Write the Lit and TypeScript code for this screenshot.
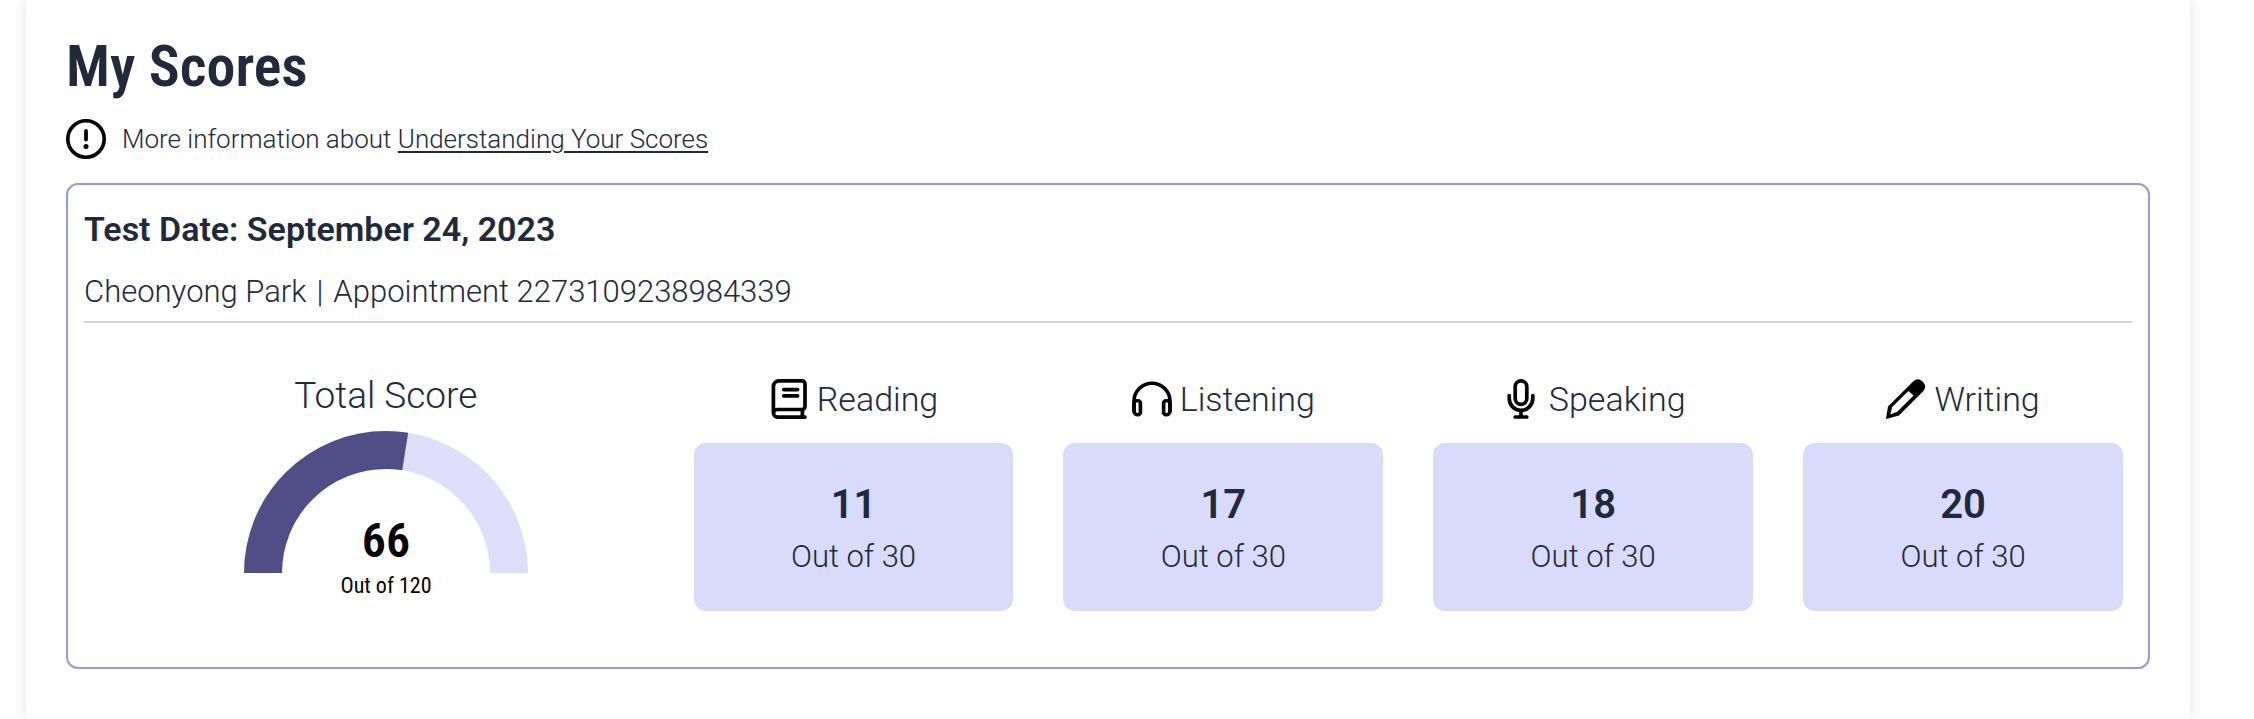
import { LitElement, html, css, svg } from "lit";
import { customElement, property } from "lit/decorators.js";

type Section = { name: string; score: number; icon: unknown };

const bookIcon = svg`
  <g fill="none" stroke="currentColor" stroke-width="3.7" stroke-linecap="round" stroke-linejoin="round">
    <path d="M4.400 33.400V7.400a5.500 5.500 0 0 1 5.500-5.500H33a3 3 0 0 1 3 3V27.500a3 3 0 0 1-3 3H8.500a4 3.800 0 0 0 0 7.600H36"/>
    <path d="M33.400 31V38M14.800 10.600H28.600M14.800 16.800H28.600"/>
  </g>`;

const headphonesIcon = svg`
  <g fill="none" stroke="currentColor" stroke-width="3.6" stroke-linecap="round" stroke-linejoin="round">
    <path d="M2 32V22.300a18 18 0 0 1 36 0V32"/>
    <path d="M2 24.400a2.600 2.600 0 0 1 2.600-2.600H6a2.400 2.400 0 0 1 2.400 2.400V33.400a2.400 2.400 0 0 1-2.400 2.400H5.800a3.800 3.800 0 0 1-3.800-3.800Z"/>
    <path d="M38 24.400a2.600 2.600 0 0 0-2.600-2.600H34a2.400 2.400 0 0 0-2.400 2.400V33.400a2.400 2.400 0 0 0 2.400 2.400H34.200a3.800 3.800 0 0 0 3.800-3.800Z"/>
  </g>`;

const micIcon = svg`
  <g fill="none" stroke="currentColor" stroke-width="3.7" stroke-linecap="round">
    <rect x="14.2" y="1.9" width="11.6" height="23.4" rx="5.8"/>
    <path d="M8.200 16.600V19.500a11.800 11.800 0 0 0 23.600 0V16.600M20 31.500V38M14.200 38H25.800"/>
  </g>`;

const pencilIcon = svg`
  <path fill="currentColor" fill-rule="evenodd"
    d="M0 40L2 27.600L27.400 2.200Q32 -1.800 36.300 2.200L37.400 3.400Q41 7.800 37.200 12.200L13 36.400ZM22.400 12L6.200 28L4.300 35.400L11.200 32.800L27.600 16.600Z"/>`;

@customElement("score-gauge")
export class ScoreGauge extends LitElement {
  @property({ type: Number }) value = 0;
  @property({ type: Number }) max = 100;

  static styles = css`
    :host { display: block; }
    svg { display: block; width: 284px; max-width: 100%; margin: 0 auto; overflow: visible; }
    .track, .fill { fill: none; stroke-width: 38px; }
    .track { stroke: #dfdffc; }
    .fill { stroke: #504e87; }
    text { fill: #000; text-anchor: middle; font-family: "Roboto Condensed", Roboto, sans-serif; }
    .value { font-size: 48px; font-weight: 600; }
    .max { font-size: 22px; font-weight: 400; }
  `;

  render() {
    const share = (this.value / this.max) * 100;
    return html`
      <svg viewBox="0 0 284 168" role="img" aria-label="${this.value} out of ${this.max}">
        <path class="track" d="M19 142a123 123 0 0 1 246 0"/>
        <path class="fill" pathLength="100" stroke-dasharray="${share} 200" d="M19 142a123 123 0 0 1 246 0"/>
        <text class="value" x="142" y="126">${this.value}</text>
        <text class="max" x="142" y="162">Out of ${this.max}</text>
      </svg>`;
  }
}

@customElement("section-score")
export class SectionScore extends LitElement {
  @property({ attribute: false }) section!: Section;

  static styles = css`
    :host { display: block; }
    .label { display: flex; align-items: center; justify-content: center; gap: 8px; margin: 0 0 24px;
      font-size: 34px; line-height: 40px; font-weight: 300; }
    .icon { width: 40px; height: 40px; flex: none; color: #000; overflow: visible; }
    .tile { display: flex; flex-direction: column; align-items: center; gap: 4px;
      padding: 38px 16px 30px; border-radius: 12px; background: #d9dbfa; }
    .score { font-size: 40px; line-height: 48px; font-weight: 600; }
    .max { font-size: 31px; line-height: 48px; font-weight: 300; }
  `;

  render() {
    const { name, score, icon } = this.section;
    return html`
      <h3 class="label"><svg class="icon" viewBox="0 0 40 40" aria-hidden="true">${icon}</svg>${name}</h3>
      <div class="tile">
        <span class="score">${score}</span>
        <span class="max">Out of 30</span>
      </div>`;
  }
}

@customElement("app-root")
export class AppRoot extends LitElement {
  private sections: Section[] = [
    { name: "Reading", score: 11, icon: bookIcon },
    { name: "Listening", score: 17, icon: headphonesIcon },
    { name: "Speaking", score: 18, icon: micIcon },
    { name: "Writing", score: 20, icon: pencilIcon },
  ];

  static styles = css`
    :host { display: block; overflow: hidden; background: #fff; color: #202a3c;
      font-family: Roboto, sans-serif; font-weight: 300; }
    .panel { box-sizing: border-box; min-height: 100vh; margin: 0 64px 0 26px; padding: 34px 40px 48px;
      background: #fff; box-shadow: 0 0 14px rgba(0, 0, 0, 0.1); }
    h1, h2, p { margin: 0; }
    h1 { font-family: "Roboto Condensed", Roboto, sans-serif; font-size: 58px; line-height: 64px; font-weight: 600; }
    .info { display: flex; align-items: center; gap: 16px; margin: 21px 0 24px; font-size: 26px; line-height: 40px; }
    .info svg { width: 40px; height: 40px; flex: none; color: #000; }
    a { color: inherit; text-decoration-thickness: 2px; text-underline-offset: 3px; }
    .report { padding: 24px 16px 56px; border: 2px solid #9a99e0; border-radius: 12px; }
    .report h2 { font-size: 34px; line-height: 40px; font-weight: 600; }
    .person { display: flex; flex-wrap: wrap; column-gap: 10px; margin-top: 22px; padding-bottom: 8px;
      border-bottom: 2px solid #d3d3d3; font-size: 31px; line-height: 42px; }
    .scores { display: grid; grid-template-columns: 19fr 45fr; column-gap: 6px; padding: 0 9px 0 0; }
    .total { padding-top: 52px; }
    .total h3 { margin: 0 0 14px; text-align: center; font-size: 37px; line-height: 42px; font-weight: 300; }
    .sections { display: grid; grid-template-columns: repeat(4, 1fr); gap: 50px; padding-top: 56px; }
  `;

  render() {
    return html`
      <main class="panel">
        <h1>My Scores</h1>
        <div class="info">
          <svg viewBox="0 0 40 40" aria-hidden="true">
            <circle cx="20" cy="20" r="18.2" fill="none" stroke="currentColor" stroke-width="3.6"/>
            <path d="M20 12V20.500" stroke="currentColor" stroke-width="3.8" stroke-linecap="round"/>
            <circle cx="20" cy="27.4" r="2.5" fill="currentColor"/>
          </svg>
          <p>More information about <a href="#understanding">Understanding Your Scores</a></p>
        </div>
        <section class="report">
          <h2>Test Date: September 24, 2023</h2>
          <div class="person"><span>Cheonyong Park</span><span>|</span><span>Appointment 2273109238984339</span></div>
          <div class="scores">
            <div class="total">
              <h3>Total Score</h3>
              <score-gauge .value=${66} .max=${120}></score-gauge>
            </div>
            <div class="sections">
              ${this.sections.map((s) => html`<section-score .section=${s}></section-score>`)}
            </div>
          </div>
        </section>
      </main>`;
  }
}
